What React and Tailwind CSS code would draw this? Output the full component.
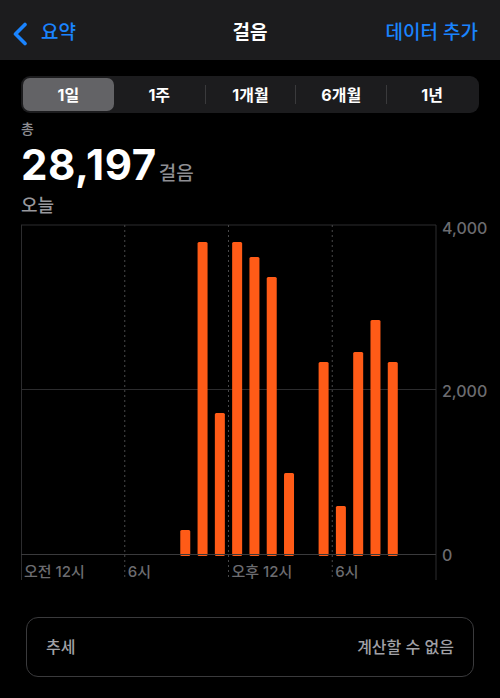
import React from "react";

const FONT = { fontFamily: "Inter, 'Noto Sans CJK KR', sans-serif" };

const steps = [
  [9, 292], [10, 3793], [11, 1714], [12, 3793], [13, 3611], [14, 3368],
  [15, 985], [17, 2334], [18, 584], [19, 2456], [20, 2845], [21, 2334],
];

const tabs = ["1일", "1주", "1개월", "6개월", "1년"];

const Chart = () => {
  const left = 21;
  const right = 436;
  const top = 10;
  const base = 339;
  const bottom = 365;
  const slot = (right - left) / 24;
  const y = (v) => base - (v / 4000) * (base - top);
  return (
    <svg width="500" height="372" className="block" style={FONT}>
      <line x1={left} y1={top} x2={right} y2={top} stroke="#2c2c2e" strokeWidth="1" />
      <line x1={left} y1={y(2000)} x2={right} y2={y(2000)} stroke="#2c2c2e" strokeWidth="1" />
      <line x1={left + 0.5} y1={top} x2={left + 0.5} y2={bottom} stroke="#2c2c2e" strokeWidth="1" />
      <line x1={right} y1={top} x2={right} y2={bottom} stroke="#2c2c2e" strokeWidth="1" />
      {[1, 2, 3].map((i) => (
        <line
          key={i}
          x1={left + i * 6 * slot}
          y1={top}
          x2={left + i * 6 * slot}
          y2={bottom}
          stroke="#48484a"
          strokeWidth="1"
          strokeDasharray="2 3"
        />
      ))}
      {steps.map(([h, v]) => (
        <rect
          key={h}
          x={left + (h + 0.5) * slot - 5}
          y={y(v)}
          width="10"
          height={base - y(v) + 2}
          rx="1.5"
          fill="#ff5b17"
        />
      ))}
      <rect x={left} y={base} width={right - left} height="1" fill="#3a3a3c" />
      <g fill="#6c6c70" fontSize="16" fontWeight="500">
        <text x="442" y={top + 9}>4,000</text>
        <text x="442" y={y(2000) + 7}>2,000</text>
        <text x="442" y={base + 7}>0</text>
      </g>
      <g fill="#6c6c70" fontSize="15" fontWeight="500">
        <text x={left + 3} y={base + 23}>오전 12시</text>
        <text x={left + 6 * slot + 3} y={base + 23}>6시</text>
        <text x={left + 12 * slot + 3} y={base + 23}>오후 12시</text>
        <text x={left + 18 * slot + 3} y={base + 23}>6시</text>
      </g>
    </svg>
  );
};

const App = () => {
  return (
    <div className="w-[500px] h-[698px] bg-black text-white overflow-hidden" style={FONT}>
      <div className="h-[60px] bg-[#1c1c1e] flex items-center justify-between px-[12px] pt-[7px]">
        <div className="flex items-center gap-[12px] text-[#1a84ff] w-[140px]">
          <svg width="17" height="24" viewBox="0 0 17 24" fill="none">
            <path d="M13 2.5 L3.5 12 L13 21.5" stroke="#1a84ff" strokeWidth="3.6" strokeLinecap="round" strokeLinejoin="round" />
          </svg>
          <span className="text-[19px] font-medium">요약</span>
        </div>
        <div className="text-[19px] font-bold">걸음</div>
        <div className="w-[140px] text-right text-[19px] font-medium text-[#1a84ff] pr-[10px]">데이터 추가</div>
      </div>

      <div className="mx-[21px] mt-[16px] h-[37px] bg-[#1c1c1e] rounded-[9px] p-[2px] flex items-center">
        {tabs.map((t, i) => (
          <div key={t} className="flex-1 h-full flex items-center">
            {i > 1 && <div className="w-px h-[19px] bg-[#3a3a3c]" />}
            <div
              className={
                i === 0
                  ? "flex-1 h-full rounded-[7px] bg-[#636366] flex items-center justify-center text-[16px] font-bold"
                  : "flex-1 h-full flex items-center justify-center text-[16px] font-bold"
              }
            >
              {t}
            </div>
          </div>
        ))}
      </div>

      <div className="px-[21px] pt-[6px]">
        <div className="text-[14px] text-[#8e8e93] leading-[20px] font-medium">총</div>
        <div className="flex items-baseline h-[55px] pt-[3px]">
          <span className="text-[42px] font-bold leading-[46px] tracking-[0.6px]">28,197</span>
          <span className="text-[19px] text-[#8e8e93] font-medium ml-[2px]">걸음</span>
        </div>
        <div className="text-[18px] text-[#98989d] font-medium leading-[24px]">오늘</div>
      </div>

      <div className="-mt-[3px]">
        <Chart />
      </div>

      <div className="mx-[26px] mt-[30px] h-[60px] rounded-[12px] border border-[#3a3a3c] flex items-center justify-between px-[19px]">
        <span className="text-[16px] text-[#a1a1a6] font-medium">추세</span>
        <span className="text-[16px] text-[#a1a1a6] font-medium">계산할 수 없음</span>
      </div>
    </div>
  );
};

export default App;
